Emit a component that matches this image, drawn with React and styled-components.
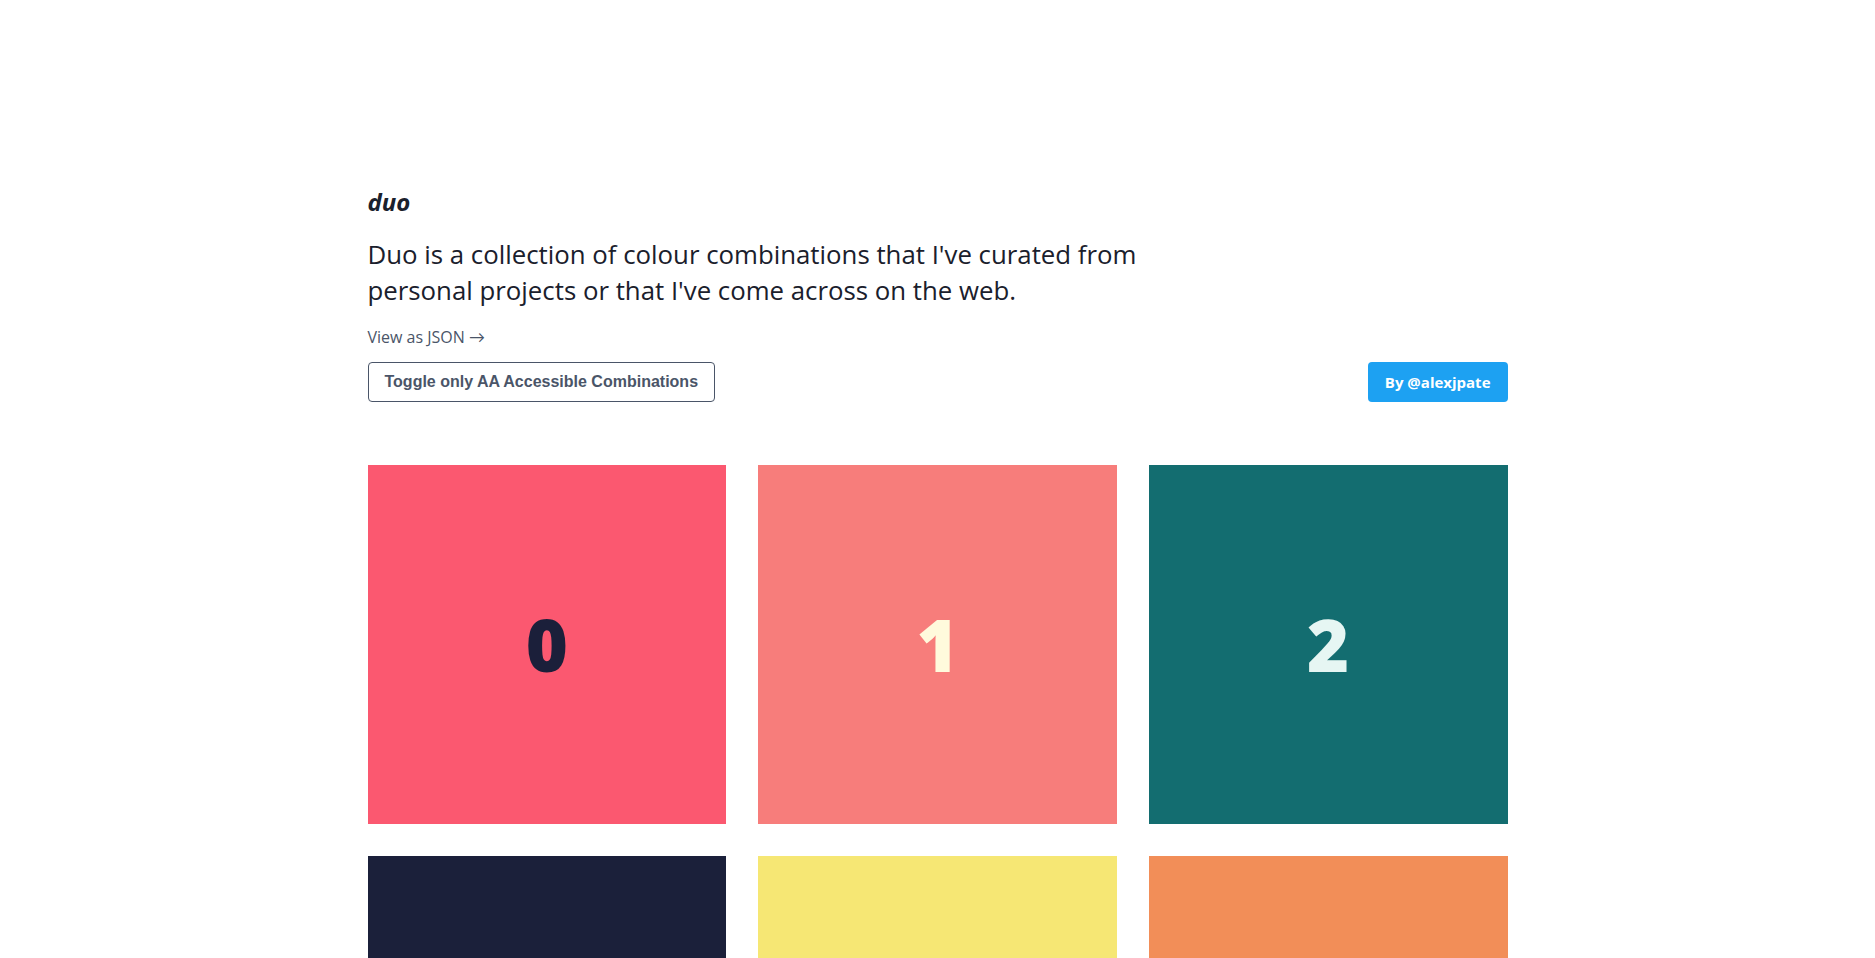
import React from 'react';
import styled, { createGlobalStyle } from 'styled-components';

const GlobalStyle = createGlobalStyle`
    html, body {
        margin: 0;
        padding: 0;
        background: #ffffff;
    }
    body {
        font-family: "Open Sans", Lato, sans-serif;
        color: #1a202c;
    }
    * {
        box-sizing: border-box;
    }
`

const Page = styled.main`
    max-width: 1140px;
    margin: 0 auto;
    padding: 187px 0 64px;
`

const Header = styled.header`
    display: flex;
    flex-direction: column;
`

const Logo = styled.h1`
    margin: 0;
    font-size: 24px;
    line-height: 30px;
    font-weight: 700;
    font-style: italic;
    color: #1a202c;
`

const Intro = styled.p`
    margin: 19px 0 0;
    max-width: 800px;
    font-size: 25.8px;
    line-height: 36px;
    font-weight: 400;
    color: #1a202c;
`

const JsonLink = styled.a`
    align-self: flex-start;
    margin-top: 18px;
    font-size: 16px;
    line-height: 22px;
    color: #4a5568;
    text-decoration: none;
`

const Toolbar = styled.div`
    display: flex;
    justify-content: space-between;
    align-items: center;
    margin-top: 14px;
`

const ToggleButton = styled.button`
    height: 40px;
    padding: 0 16px;
    font-family: "Liberation Sans", Arial, sans-serif;
    font-size: 16px;
    font-weight: 700;
    color: #4a5568;
    background: #ffffff;
    border: 1px solid #4a5568;
    border-radius: 4px;
    cursor: pointer;
`

const AuthorButton = styled.a`
    display: flex;
    align-items: center;
    height: 40px;
    padding: 0 17px;
    font-size: 15px;
    font-weight: 700;
    color: #ffffff;
    background: #1da1f2;
    border-radius: 4px;
    text-decoration: none;
`

const Grid = styled.section`
    display: grid;
    grid-template-columns: repeat(3, 1fr);
    gap: 32px;
    margin-top: 63px;
`

const Swatch = styled.div`
    aspect-ratio: 1 / 1;
    display: flex;
    align-items: center;
    justify-content: center;
    background: ${p => p.$bg};
    color: ${p => p.$fg};
    font-size: 72px;
    font-weight: 800;
    line-height: 1;
`

const combos = [
    { bg: '#fb5870', fg: '#1b1f3a' },
    { bg: '#f77d7b', fg: '#fffadc' },
    { bg: '#136d70', fg: '#e6f6f3' },
    { bg: '#1b203a', fg: '#f6e774' },
    { bg: '#f6e774', fg: '#1b203a' },
    { bg: '#f28e58', fg: '#1b203a' },
    { bg: '#2d3e50', fg: '#f28e58' },
    { bg: '#e6f6f3', fg: '#136d70' },
    { bg: '#fffadc', fg: '#fb5870' },
]

export default function App() {
    return (
        <>
            <GlobalStyle />
            <Page>
                <Header>
                    <Logo>duo</Logo>
                    <Intro>
                        Duo is a collection of colour combinations that I've curated from personal projects or that I've come across on the web.
                    </Intro>
                    <JsonLink href="#">View as JSON →</JsonLink>
                    <Toolbar>
                        <ToggleButton>Toggle only AA Accessible Combinations</ToggleButton>
                        <AuthorButton href="#">By @alexjpate</AuthorButton>
                    </Toolbar>
                </Header>
                <Grid>
                    {combos.map((c, i) => (
                        <Swatch key={i} $bg={c.bg} $fg={c.fg}>{i}</Swatch>
                    ))}
                </Grid>
            </Page>
        </>
    )
}
